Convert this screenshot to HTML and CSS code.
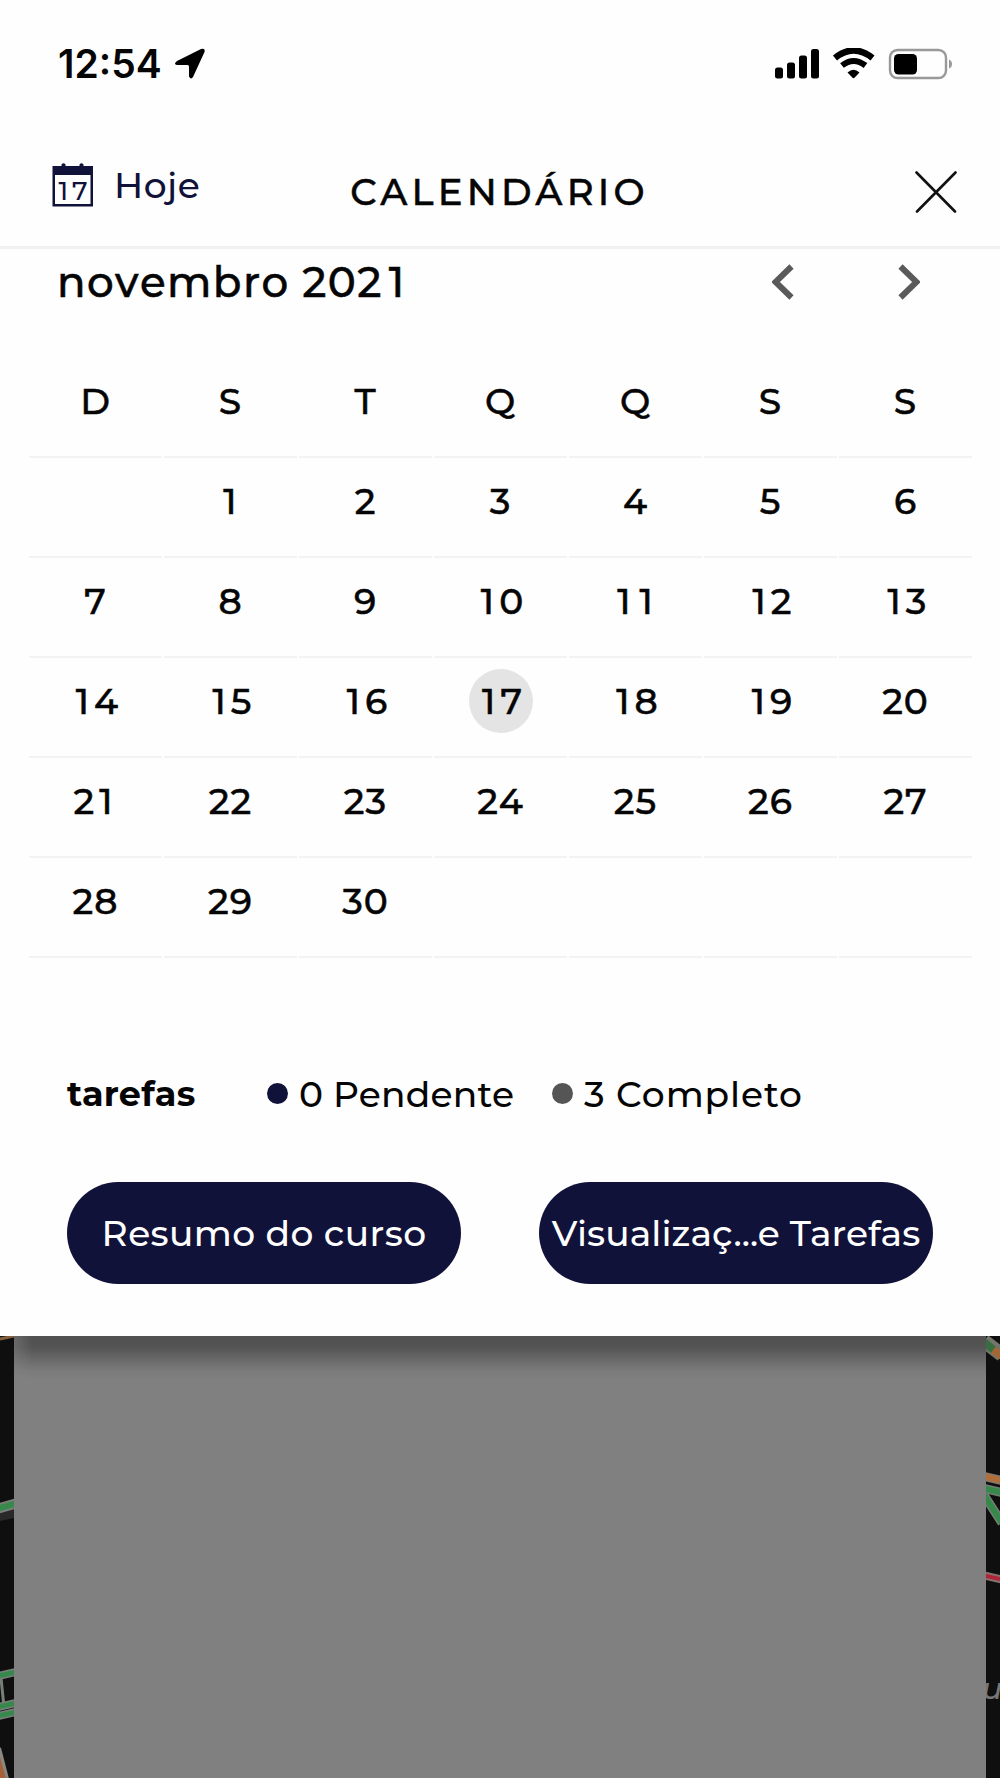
FILE: index.html
```html
<!DOCTYPE html>
<html lang="pt-BR">
<head>
<meta charset="UTF-8" />
<meta name="viewport" content="width=device-width, initial-scale=1.0" />
<title>Calendário</title>
<link rel="stylesheet" href="styles.css">
</head>
<body>
<div class="sheet">
  <div class="status-bar">
    <span class="time">12:54</span>
    <svg class="location" width="32" height="32" viewBox="0 0 32 32"><path d="M3 13 L27 1 Q31.500 -0.500 30.500 4 L19 29 Q17 32 15 28.500 V18.500 Q15 17 13.500 17 H3 Q-1 16 3 13 Z"/></svg>
    <svg class="status-icons" width="180" height="32" viewBox="0 0 180 32">
      <rect x="0" y="19.500" width="8" height="11" rx="2.500"/>
      <rect x="12" y="14.500" width="8" height="16" rx="2.500"/>
      <rect x="24" y="7.500" width="8" height="23" rx="2.500"/>
      <rect x="36" y="1" width="8" height="29.500" rx="2.500"/>
      <path d="M60 10 Q78.500 -5 97.500 10" fill="none" stroke="#000" stroke-width="6.500"/>
      <path d="M67 17.500 Q78.500 8.500 90.500 17.500" fill="none" stroke="#000" stroke-width="6"/>
      <path d="M72.500 24.500 Q78.500 19 84.500 24.500 L79.500 29.800 Q78.500 30.600 77.500 29.800 Z"/>
      <rect x="115" y="2" width="56" height="28" rx="7.500" fill="none" stroke="#999" stroke-width="2.400"/>
      <rect x="119" y="6" width="23" height="20.500" rx="4.500"/>
      <path d="M174 11.500 Q177 12.500 177 16 Q177 19.500 174 20.500 Z" fill="#999"/>
    </svg>
  </div>

  <div class="header">
    <button class="today">
      <svg width="42" height="44" viewBox="0 0 42 44">
        <path d="M0.500 3 H9.500 V1.500 Q11.500 -1 13.500 1.500 V3 H27.500 V1.500 Q29.500 -1 31.500 1.500 V3 H41 V43.500 H0.500 Z M3 12 V41 H38.500 V12 Z" fill-rule="evenodd"/>
        <text x="6.500" y="36.500" class="icon-day">17</text>
      </svg>
      <span>Hoje</span>
    </button>
    <h1>CALENDÁRIO</h1>
    <button class="close">
      <svg width="42" height="42" viewBox="0 0 42 42"><path d="M1.500 1.500 L40 40.500 M40.500 1.500 L2 40.500"/></svg>
    </button>
  </div>

  <div class="month">
    <h2>novembro 202<span class="one">1</span></h2>
    <div class="arrows">
      <svg width="22" height="36" viewBox="0 0 22 36"><path d="M19.500 2.500 L3.500 18 L19.500 33.500"/></svg>
      <svg width="22" height="36" viewBox="0 0 22 36"><path d="M2.500 2.500 L18.500 18 L2.500 33.500"/></svg>
    </div>
  </div>

  <div class="calendar" id="calendar"></div>

  <div class="tasks">
    <strong>tarefas</strong>
    <span class="pending"><i class="dot"></i>0 Pendente</span>
    <span class="completed"><i class="dot"></i>3 Completo</span>
  </div>

  <div class="buttons">
    <button>Resumo do curso</button>
    <button class="view">Visualizaç...e Tarefas</button>
  </div>
</div>

<div class="backdrop">
  <svg class="map" width="14" height="443" viewBox="0 0 14 443">
    <path d="M0 172 L14 169 V182 L0 185 Z" fill="#292929"/>
    <path d="M0 3 L14 0" stroke="#85603f" stroke-width="3"/>
    <path d="M-2 172.500 L16 167.500" stroke="#787f78" stroke-width="10"/>
    <path d="M-2 172.500 L16 167.500" stroke="#36894a" stroke-width="6"/>
    <path d="M-2 340 L16 336 M-2 380 L16 376 M-2 371 L16 367" stroke="#787f78" stroke-width="8"/>
    <path d="M1 342 L4 371" stroke="#787f78" stroke-width="3"/>
    <path d="M-2 340 L16 336 M-2 380 L16 376 M-2 371 L16 367" stroke="#36894a" stroke-width="5"/>
    <path d="M-1 412 L7 443" stroke="#8b8781" stroke-width="4"/>
    <path d="M0 421 L6 443 H0 Z" fill="#a56239"/>
  </svg>
  <div class="panel"></div>
  <svg class="map" width="14" height="443" viewBox="0 0 14 443">
    <path d="M-2 5 L16 19" stroke="#75756b" stroke-width="14"/>
    <path d="M-2 6 L9 15" stroke="#376f42" stroke-width="8"/>
    <path d="M7 14 L16 20" stroke="#a06837" stroke-width="8"/>
    <path d="M-2 140.500 L16 144.500" stroke="#827a70" stroke-width="9"/>
    <path d="M-2 140.500 L16 144.500" stroke="#b16e38" stroke-width="6"/>
    <path d="M-2 152.500 L16 156.500 M-2 159 L16 187" stroke="#737e73" stroke-width="9"/>
    <path d="M-2 152.500 L16 156.500 M-2 159 L16 187" stroke="#36894a" stroke-width="6"/>
    <path d="M-2 239.500 L16 243.500" stroke="#85716d" stroke-width="8"/>
    <path d="M-2 239.500 L16 243.500" stroke="#b02339" stroke-width="4"/>
    <text x="-4" y="363" class="map-label">u</text>
  </svg>
</div>

<script>
  const calendar = document.getElementById('calendar');
  const weekDays = ['D', 'S', 'T', 'Q', 'Q', 'S', 'S'];
  const firstDay = 1;
  const lastDate = 30;
  const today = 17;

  function addCell(text, name) {
    const cell = document.createElement('div');
    cell.className = 'cell ' + name;
    const label = document.createElement('span');
    // the digit 1 gets the same room as the others
    label.innerHTML = String(text).replace(/1/g, '<b class="one">1</b>');
    cell.appendChild(label);
    calendar.appendChild(cell);
  }

  weekDays.forEach(day => addCell(day, 'week-day'));

  for (let i = 0; i < 35; i++) {
    const date = i - firstDay + 1;
    const inMonth = date > 0 && date <= lastDate;
    addCell(inMonth ? date : '', date === today ? 'today-cell' : 'date');
  }
</script>
</body>
</html>
```
FILE: styles.css
```css
* {
  box-sizing: border-box;
}

body {
  margin: 0;
  height: 1778px;
  display: flex;
  flex-direction: column;
  overflow: hidden;
  background: #0f0f0f;
  color: #050505;
  font-family: Montserrat, Inter, sans-serif;
  font-size: 36px;
  font-weight: 500;
}

button {
  border: none;
  padding: 0;
  background: none;
  font: inherit;
  color: inherit;
}

svg {
  display: block;
  flex: none;
}

.sheet {
  height: 1336px;
  background: #fefefe;
}

.status-bar {
  display: flex;
  height: 128px;
  padding: 0 45px 0 58px;
  align-items: center;
}

.time {
  font-family: Inter, sans-serif;
  font-size: 39px;
  font-weight: 600;
  line-height: 130px;
}

.location {
  margin-left: 12px;
}

.status-icons {
  margin-left: auto;
}

.header {
  display: grid;
  grid-template-columns: 290px 1fr 290px;
  height: 121px;
  padding: 0 43px 0 52px;
  border-bottom: 3px solid #f1f1f1;
}

.today {
  display: flex;
  align-items: center;
  height: 114px;
  color: #11123a;
  fill: #11123a;
  gap: 20px;
  letter-spacing: 0.5px;
}

.icon-day {
  font-size: 26px;
  font-kerning: none;
  letter-spacing: 4px;
}

h1 {
  margin: 0 0 0 -10px;
  font-size: 37px;
  font-weight: 500;
  line-height: 128px;
  letter-spacing: 4.2px;
  text-align: center;
  white-space: nowrap;
}

h1, h2, .cell {
  -webkit-text-stroke: 0.5px #050505;
}

.close {
  justify-self: end;
  height: 128px;
}

.close path {
  fill: none;
  stroke: #111;
  stroke-width: 2.6;
  stroke-linecap: round;
}

.month {
  display: flex;
  height: 109px;
  padding: 0 80px 0 57px;
  justify-content: space-between;
}

h2 {
  margin: 0;
  font-size: 42px;
  font-weight: 500;
  font-kerning: none;
  line-height: 66px;
  letter-spacing: 1.4px;
}

h2 .one {
  margin-left: 6px;
}

.arrows {
  display: flex;
  gap: 104px;
  padding-top: 15px;
}

.arrows path {
  fill: none;
  stroke: #5a5a5a;
  stroke-width: 6;
}

.calendar {
  display: grid;
  grid-template-columns: repeat(7, 1fr);
  grid-auto-rows: 100px;
  column-gap: 2px;
  padding: 0 28px 0 29px;
  height: 672px;
}

.cell {
  border-bottom: 2px solid #f3f3f3;
  display: flex;
  justify-content: center;
  padding-top: 11px;
}

.cell span {
  width: 64px;
  height: 64px;
  line-height: 64px;
  text-align: center;
  font-kerning: none;
  letter-spacing: 1px;
}

.cell .one {
  margin: 0 4px;
  font-weight: 500;
}

.today-cell span {
  background: #e4e4e4;
  border-radius: 50%;
}

.tasks {
  display: flex;
  height: 152px;
  padding-left: 67px;
  line-height: 128px;
}

.tasks strong {
  width: 200px;
  font-size: 35px;
  letter-spacing: 0.3px;
}

.pending {
  width: 285px;
  letter-spacing: 0.2px;
}

.completed {
  letter-spacing: 0.9px;
}

.dot {
  display: inline-block;
  width: 21px;
  height: 21px;
  margin-right: 11px;
  border-radius: 50%;
  background: #11123a;
  vertical-align: 3px;
}

.completed .dot {
  background: #555;
}

.buttons {
  display: flex;
  gap: 78px;
  padding-left: 67px;
}

.buttons button {
  width: 394px;
  height: 102px;
  border-radius: 51px;
  background: #11123a;
  color: #fff;
  letter-spacing: 0.4px;
  white-space: nowrap;
}

.buttons .view {
  letter-spacing: 0.1px;
}

.backdrop {
  display: flex;
  height: 442px;
}

.panel {
  width: 972px;
  background: #808080;
}

.panel::before {
  content: "";
  display: block;
  height: 44px;
  background: linear-gradient(#505050, #555 12px, #6a6a6a 24px, #7b7b7b 35px, #808080);
  mask-image: linear-gradient(to right, rgba(0,0,0,0.5), #000 18px);
}

.map-label {
  font-size: 30px;
  font-style: italic;
  fill: #777;
}
```
